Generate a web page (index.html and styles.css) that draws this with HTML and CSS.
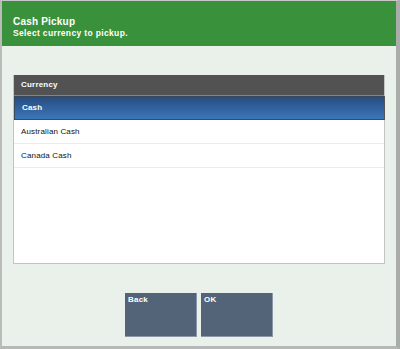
FILE: index.html
```html
<!DOCTYPE html>
<html lang="en">
<head>
  <meta charset="UTF-8">
  <title>Cash Pickup</title>
  <link rel="stylesheet" href="styles.css">
</head>
<body>
  <div class="screen">
    <!-- Header -->
    <header class="header">
      <div class="title">Cash Pickup</div>
      <div class="subtitle">Select currency to pickup.</div>
    </header>

    <!-- Currency list -->
    <section class="list">
      <div class="list-head">Currency</div>
      <div class="row selected">Cash</div>
      <div class="row">Australian Cash</div>
      <div class="row">Canada Cash</div>
    </section>

    <!-- Buttons -->
    <div class="actions">
      <button class="btn">Back</button>
      <button class="btn">OK</button>
    </div>
  </div>
</body>
</html>
```

FILE: styles.css
```css
html, body { margin: 0; padding: 0; }
body { font-family: "Liberation Sans", Arial, sans-serif; background-color: #eaf1ea; }
.screen { width: 400px; height: 349px; box-sizing: border-box; background-color: #eaf1ea; border-top: 1px solid #c8c8c8; border-left: 2px solid #b9bcb9; border-right: 4px solid #a9aca9; border-bottom: 3px solid #b5b8b5; display: flex; flex-direction: column; }
.header { height: 45px; box-sizing: border-box; background-color: #3a913c; color: #fff; font-weight: bold; padding: 15px 0 0 11px; }
.title { font-size: 10px; line-height: 12px; letter-spacing: 0.2px; }
.subtitle { font-size: 8.5px; line-height: 11px; letter-spacing: 0.35px; }
.list { margin: 29px 0 0 11px; width: 372px; height: 189px; box-sizing: border-box; background-color: #fff; border: 1px solid #c2c4c2; border-top: none; }
.list-head { height: 20px; background-color: #525252; color: #fff; font-size: 8px; font-weight: bold; line-height: 20px; padding-left: 7px; letter-spacing: 0.2px; border-bottom: 1px solid #858585; }
.row { height: 23px; line-height: 23px; font-size: 8px; color: #111; padding-left: 7px; letter-spacing: 0.15px; border-bottom: 1px solid #ececec; }
.row.selected { height: 22px; line-height: 22px; color: #fff; font-weight: bold; background: linear-gradient(#284c7f, #3b77ba); border: 1px solid #3a4a5c; border-right-color: #555; margin-right: -1px; }
.actions { display: flex; justify-content: center; gap: 4px; margin-top: 29px; }
.btn { width: 72px; height: 44px; box-sizing: border-box; background-color: #536479; color: #fff; font-family: inherit; font-size: 8px; font-weight: bold; letter-spacing: 0.2px; text-align: left; padding: 2px 3px; border: none; border-right: 1px solid #8a98a8; border-bottom: 1px solid #8a98a8; display: flex; align-items: flex-start; }
```
